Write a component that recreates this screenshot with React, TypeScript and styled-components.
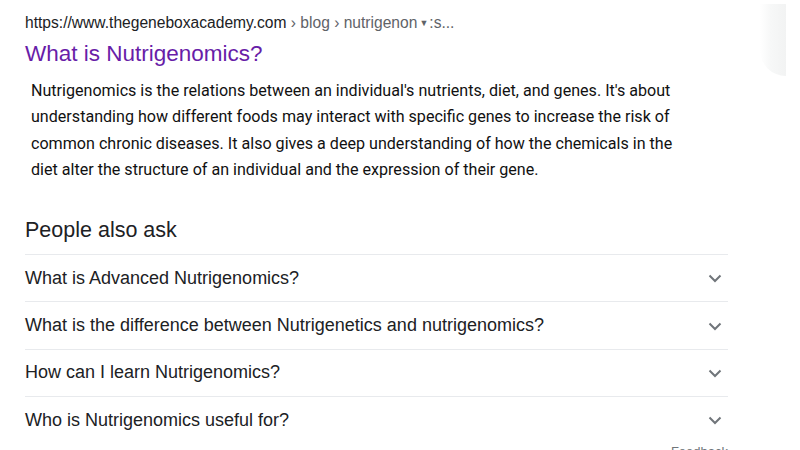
import styled, { createGlobalStyle } from "styled-components";

const GlobalStyle = createGlobalStyle`
  html, body {
    margin: 0;
    padding: 0;
    background: #fff;
    overflow: hidden;
  }
`;

const SNIPPET_LINES = [
  "Nutrigenomics is the relations between an individual's nutrients, diet, and genes. It's about",
  "understanding how different foods may interact with specific genes to increase the risk of",
  "common chronic diseases. It also gives a deep understanding of how the chemicals in the",
  "diet alter the structure of an individual and the expression of their gene.",
];

const QUESTIONS = [
  "What is Advanced Nutrigenomics?",
  "What is the difference between Nutrigenetics and nutrigenomics?",
  "How can I learn Nutrigenomics?",
  "Who is Nutrigenomics useful for?",
];

const Page = styled.div`
  display: flex;
  width: 800px;
  height: 450px;
  overflow: hidden;
`;

const Main = styled.main`
  width: 703px;
  padding: 13px 0 0 25px;
  font-family: "Liberation Sans", Arial, sans-serif;
  color: #202124;
`;

const Shade = styled.div`
  width: 26px;
  height: 72px;
  margin: 4px 0 0 32px;
  background: linear-gradient(to right, #fff 0%, #f7f8f8 40%, #f2f3f3 100%);
  border-radius: 0 0 0 40px;
`;

const Breadcrumb = styled.div`
  font-size: 15.6px;
  line-height: 20px;
  white-space: nowrap;
  color: #202124;

  span {
    color: #5f6368;
  }
`;

const Caret = styled.span`
  font-size: 9px;
  margin: 0 1px 0 2px;
  position: relative;
  top: -2px;
`;

const Title = styled.h3`
  margin: 6px 0 0;
  font-size: 22.5px;
  line-height: 26px;
  font-weight: 400;
  color: #681da8;
`;

const Snippet = styled.p`
  margin: 11px 0 0 6px;
  font-family: Roboto, "Liberation Sans", sans-serif;
  font-size: 16.1px;
  line-height: 26.3px;
  color: #111;

  span {
    display: block;
    white-space: nowrap;
  }
`;

const AskHeading = styled.h2`
  margin: 34px 0 11px;
  font-size: 21.5px;
  line-height: 26px;
  font-weight: 400;
  color: #202124;
`;

const Question = styled.div`
  display: flex;
  align-items: center;
  justify-content: space-between;
  height: 46.3px;
  border-top: 1px solid #e8eaed;
  font-size: 18px;
  color: #202124;
  cursor: pointer;
`;

const Chevron = styled.svg`
  width: 24px;
  height: 24px;
  margin-right: 1px;
  flex: none;
`;

const Feedback = styled.div`
  margin-top: 1px;
  text-align: right;
  font-size: 13px;
  line-height: 16px;
  color: #70757a;
`;

const App = () => {
  return (
    <>
      <GlobalStyle />
      <Page>
        <Main>
          <Breadcrumb>
            https://www.thegeneboxacademy.com
            <span>
              {" › blog › nutrigenon"}
              <Caret>▼</Caret>
              {":s..."}
            </span>
          </Breadcrumb>
          <Title>What is Nutrigenomics?</Title>
          <Snippet>
            {SNIPPET_LINES.map((line) => (
              <span key={line}>{line}</span>
            ))}
          </Snippet>
          <AskHeading>People also ask</AskHeading>
          {QUESTIONS.map((q) => (
            <Question key={q}>
              {q}
              <Chevron viewBox="0 0 24 24">
                <path d="M6.5 9.5l5.5 5.5 5.5-5.5" fill="none" stroke="#70757a" strokeWidth="2" />
              </Chevron>
            </Question>
          ))}
          <Feedback>Feedback</Feedback>
        </Main>
        <Shade />
      </Page>
    </>
  );
};

export default App;
